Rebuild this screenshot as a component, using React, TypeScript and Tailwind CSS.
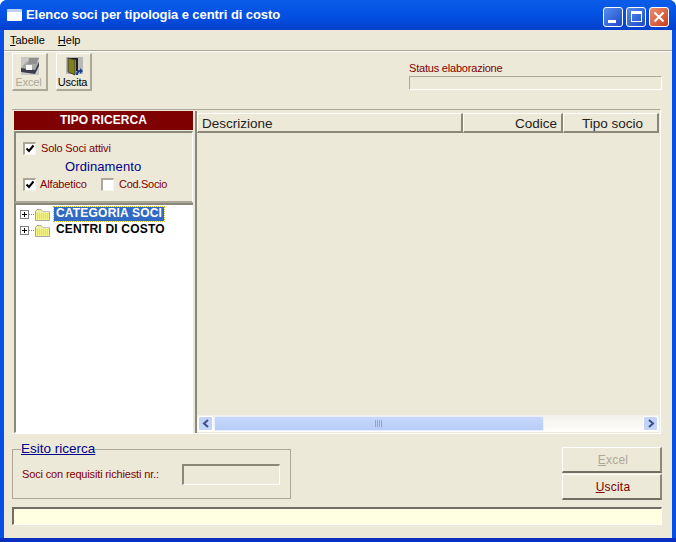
import React from "react";

const Check = ({ checked }: { checked?: boolean }) => (
  <span className="block w-[13px] h-[13px] shrink-0 bg-white border-t-2 border-l-2 border-t-[#aca899] border-l-[#aca899] border-r border-b border-r-[#f5f4ee] border-b-[#f5f4ee]">
    {checked && (
      <svg viewBox="0 0 10 10" className="w-[10px] h-[10px]">
        <path d="M1.5 4.5 L4 7 L8.5 1.5" fill="none" stroke="#000" strokeWidth="2" />
      </svg>
    )}
  </span>
);

const Plus = () => (
  <svg width="9" height="9" viewBox="0 0 9 9" className="shrink-0">
    <rect x="0.5" y="0.5" width="8" height="8" fill="#fff" stroke="#808080" />
    <path d="M2 4.5H7M4.5 2V7" stroke="#000" />
  </svg>
);

const Folder = () => (
  <svg width="15" height="13" viewBox="0 0 15 13" className="shrink-0">
    <path d="M0.5 3.5 L2 1.5 H6 L7.5 3.5 H14.5 V12.5 H0.5 Z" fill="#f2f280" stroke="#a8a8a0" />
    <path d="M1 4H14" stroke="#e8e8e0" />
    <path d="M2 6H13M2 8H13M2 10H13" stroke="#d8c840" strokeDasharray="1 1" />
  </svg>
);

const TreeRow = ({ label, selected }: { label: string; selected?: boolean }) => (
  <div className="flex items-center h-[16px] pl-[4px]">
    <Plus />
    <span className="w-[5px] border-t border-dotted border-[#808080] mr-[1px]" />
    <Folder />
    <span
      className={`ml-[4px] h-[14px] px-[2px] leading-[13px] text-[12px] font-bold tracking-[0.2px] whitespace-nowrap ${
        selected ? "bg-[#316ac5] text-white outline-1 outline-dotted outline-[#d8c030]" : "text-black"
      }`}
    >
      {label}
    </span>
  </div>
);

const ToolButton = ({ label, disabled, children }: { label: string; disabled?: boolean; children: React.ReactNode }) => (
  <div className="w-[36px] h-[38px] flex flex-col items-center bg-[#ece9d8] border-t border-l border-white border-r-2 border-b-2 border-r-[#aca899] border-b-[#aca899]">
    <div className="h-[20px] mt-[3px]">{children}</div>
    <span className={`text-[11px] leading-[13px] tracking-[-0.2px] pr-[2px] ${disabled ? "text-[#aca899]" : "text-black"}`}>{label}</span>
  </div>
);

const BigButton = ({ disabled, children }: { disabled?: boolean; children: React.ReactNode }) => (
  <div className={`w-[100px] h-[26px] flex items-center justify-center pl-[3px] text-[12px] tracking-[0.2px] bg-[#ece9d8] border-t border-l border-white border-r-2 border-b-2 border-r-[#8a8878] border-b-[#716f64] ${disabled ? "text-[#aca899]" : "text-[#800000]"}`}>
    {children}
  </div>
);

const ColHead = ({ className, children }: { className: string; children: React.ReactNode }) => (
  <div className={`h-[20px] leading-[20px] text-[13.5px] text-[#222] bg-[#ece9d8] border-t border-l border-white border-r-2 border-r-[#8a8878] border-b-2 border-b-[#8a8878] ${className}`}>
    {children}
  </div>
);

const WinBtn = ({ className, children }: { className: string; children: React.ReactNode }) => (
  <div className={`w-[20px] h-[20px] rounded-[3px] border border-white flex items-center justify-center ${className}`}>
    {children}
  </div>
);

export default function App() {
  return (
    <div className="w-[676px] h-[542px] flex flex-col overflow-hidden bg-[#0650e5] border-b-4 border-b-[#0a2fc0] rounded-t-[7px] font-['Liberation_Sans',sans-serif]">
      {/* Title bar */}
      <div className="h-[30px] shrink-0 flex items-center pl-[7px] pr-[7px] bg-gradient-to-b from-[#0a5ce8] via-[#0451e4] to-[#0340cc]">
        <div className="w-[15px] h-[12px] bg-white border-t-[3px] border-[#bcd0f4] rounded-[1px]" />
        <span className="ml-[4px] text-white font-bold text-[13px] tracking-[-0.07px] whitespace-nowrap">
          Elenco soci per tipologia e centri di costo
        </span>
        <div className="ml-auto flex gap-[3px] items-center pt-[3px]">
          <WinBtn className="bg-gradient-to-br from-[#5a8cf0] to-[#1c49c8]">
            <div className="w-[8px] h-[3px] bg-white mt-[9px] mr-[3px]" />
          </WinBtn>
          <WinBtn className="bg-gradient-to-br from-[#5a8cf0] to-[#1c49c8]">
            <div className="w-[11px] h-[11px] border border-t-[3px] border-white" />
          </WinBtn>
          <WinBtn className="bg-gradient-to-br from-[#ea8f70] to-[#c83c18]">
            <svg width="12" height="12" viewBox="0 0 12 12">
              <path d="M1.5 1.5L10.5 10.5M10.5 1.5L1.5 10.5" stroke="#fff" strokeWidth="2.2" />
            </svg>
          </WinBtn>
        </div>
      </div>

      {/* Client area */}
      <div className="mx-[4px] flex-1 flex flex-col min-h-0 bg-[#ece9d8]">
        {/* Menu */}
        <div className="h-[20px] shrink-0 flex items-center pl-[6px] gap-[13px] text-[11px] text-black">
          <span><span className="underline">T</span>abelle</span>
          <span><span className="underline">H</span>elp</span>
        </div>
        <div className="h-[2px] shrink-0 border-t border-[#aca899] border-b-white border-b" />

        {/* Toolbar */}
        <div className="h-[57px] shrink-0 flex pl-[8px] pt-[1px] pr-[10px]">
          <ToolButton label="Excel" disabled>
            <svg width="20" height="19" viewBox="0 0 20 19">
              <rect x="1" y="0" width="18" height="18" fill="#c8c8c4" />
              <path d="M1 11 L6 5 H19 L15 13 Z" fill="#a8a8a8" />
              <path d="M1 11 L15 13 L19 5 L19 9 L15 17 L1 15 Z" fill="#3c3c50" />
              <path d="M9 1 H19 L16 7 H8 Z" fill="#909090" />
              <path d="M6 8 H12 V13 H6 Z" fill="#f8f8f8" />
            </svg>
          </ToolButton>
          <div className="ml-[8px]">
            <ToolButton label="Uscita">
              <svg width="18" height="19" viewBox="0 0 18 19">
                <rect x="1" y="0" width="17" height="17" fill="#b8b8b8" />
                <path d="M3 1 H13 V14 H11 V3 L3 1 Z" fill="#202020" />
                <path d="M3 1 L10 3 V18 L3 15 Z" fill="#808020" stroke="#202020" strokeWidth="0.7" />
                <path d="M11 18 Q11 13 15 13 V11 L18 14 L15 17 V15 Q13 15 13 18 Z" fill="#1a3a90" />
              </svg>
            </ToolButton>
          </div>
          <div className="ml-auto w-[253px] pt-[8px]">
            <div className="text-[11px] leading-[14px] tracking-[-0.2px] text-[#800000] whitespace-nowrap">Status elaborazione</div>
            <div className="h-[14px] mt-[1px] border-t border-l border-[#aca899] border-r border-b border-r-white border-b-white" />
          </div>
        </div>

        {/* Main panel */}
        <div className="h-[325px] shrink-0 ml-[8px] mr-[11px] flex gap-[2px] pl-[2px] pr-[1px] pt-[1px] border-t border-t-[#aca899] border-r border-r-white border-b border-b-white">
          {/* Left */}
          <div className="w-[179px] shrink-0 flex flex-col">
            <div className="h-[19px] shrink-0 bg-[#7f0000] text-white font-bold text-[12px] tracking-[0.1px] leading-[19px] text-center">
              TIPO RICERCA
            </div>
            <div className="h-[72px] shrink-0 mt-px flex flex-col pl-[7px] pt-[8px] border-t-2 border-l-2 border-[#8a8878] border-r border-r-white border-b-2 border-b-[#aca899] text-[11px] tracking-[-0.15px] text-[#800000]">
              <div className="flex items-center gap-[5px] h-[14px]">
                <Check checked />
                <span className="whitespace-nowrap">Solo Soci attivi</span>
              </div>
              <div className="text-[13px] leading-[16px] tracking-[0.1px] text-[#00008b] mt-[4px] pl-[42px]">Ordinamento</div>
              <div className="flex items-center h-[14px] mt-[2px]">
                <Check checked />
                <span className="ml-[4px] w-[61px] whitespace-nowrap">Alfabetico</span>
                <Check />
                <span className="ml-[5px] tracking-[-0.3px] whitespace-nowrap">Cod.Socio</span>
              </div>
            </div>
            <div className="flex-1 min-h-0 pt-[1px] bg-white border-t-2 border-l-2 border-t-[#8a8878] border-l-[#8a8878] border-b border-b-white">
              <TreeRow label="CATEGORIA SOCI" selected />
              <TreeRow label="CENTRI DI COSTO" />
            </div>
          </div>

          {/* Right */}
          <div className="flex-1 min-w-0 flex flex-col pt-[2px] border-l-2 border-l-[#8a8878]">
            <div className="flex shrink-0">
              <ColHead className="w-[266px] pl-[4px]">Descrizione</ColHead>
              <ColHead className="w-[100px] text-right pr-[4px]">Codice</ColHead>
              <ColHead className="flex-1 text-center pl-[4px]">Tipo socio</ColHead>
            </div>
            <div className="flex-1" />
            <div className="h-[17px] mb-px shrink-0 flex items-center px-px bg-gradient-to-b from-[#f3f1ec] to-[#fdfdfb]">
              <div className="w-[15px] h-[15px] rounded-[2px] bg-[#c4d4f8] border border-white flex items-center justify-center">
                <svg width="8" height="9" viewBox="0 0 8 9">
                  <path d="M6 1L2 4.5L6 8" fill="none" stroke="#3a4f8a" strokeWidth="2" />
                </svg>
              </div>
              <div className="ml-[1px] w-[330px] h-[15px] rounded-[2px] bg-gradient-to-b from-[#c8d8fb] to-[#b8ccf8] border border-[#e8eefc] flex items-center justify-center">
                <svg width="8" height="7" viewBox="0 0 8 7">
                  <path d="M0.5 0V7M2.5 0V7M4.5 0V7M6.5 0V7" stroke="#8aa4e4" />
                </svg>
              </div>
              <div className="flex-1" />
              <div className="w-[15px] h-[15px] rounded-[2px] bg-[#c4d4f8] border border-white flex items-center justify-center">
                <svg width="8" height="9" viewBox="0 0 8 9">
                  <path d="M2 1L6 4.5L2 8" fill="none" stroke="#3a4f8a" strokeWidth="2" />
                </svg>
              </div>
            </div>
          </div>
        </div>

        {/* Bottom */}
        <div className="shrink-0 flex justify-between ml-[8px] mr-[10px] mt-[7px] h-[65px]">
          <fieldset className="w-[279px] h-[58px] border border-[#aca899] pl-[9px] min-w-0">
            <legend className="ml-[-1px] px-0 text-[13.5px] leading-[16px] text-[#00008b] underline">Esito ricerca</legend>
            <div className="flex items-center mt-[7px] text-[11px] tracking-[-0.15px] text-[#800000]">
              <span className="w-[160px] whitespace-nowrap">Soci con requisiti richiesti nr.:</span>
              <div className="w-[98px] h-[21px] border-t-2 border-l-2 border-[#8a8878] border-r border-b border-r-white border-b-white" />
            </div>
          </fieldset>
          <div className="flex flex-col gap-[1px] pt-[6px]">
            <BigButton disabled><span><span className="underline">E</span>xcel</span></BigButton>
            <BigButton><span><span className="underline">U</span>scita</span></BigButton>
          </div>
        </div>

        {/* Status bar */}
        <div className="h-[18px] shrink-0 ml-[8px] mr-[10px] mt-[1px] bg-[#ffffe1] border-t-2 border-l-2 border-[#716f64] border-r border-b border-r-white border-b-white" />
      </div>
    </div>
  );
}
